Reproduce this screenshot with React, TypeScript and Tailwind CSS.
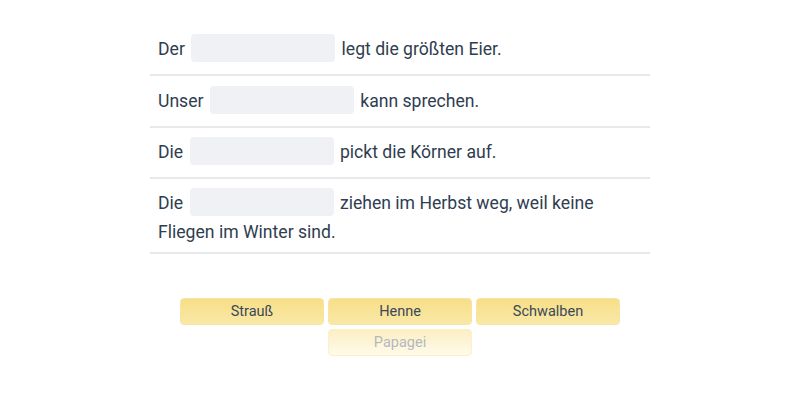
const rows: { before: string; after: string }[] = [
    { before: "Der", after: "legt die größten Eier." },
    { before: "Unser", after: "kann sprechen." },
    { before: "Die", after: "pickt die Körner auf." },
    { before: "Die", after: "ziehen im Herbst weg, weil keine Fliegen im Winter sind." },
];

const words = ["Strauß", "Henne", "Schwalben"];

const Blank = () => (
    <span className="inline-block align-[-11px] w-36 h-7 mx-0.5 mb-[4px] rounded bg-[#f0f1f5]"></span>
);

const App = () => {
    return (
        <div className="w-[800px] h-[400px] bg-white pt-[25px]" style={{ fontFamily: 'Roboto, "Liberation Sans", sans-serif' }}>
            <ul className="w-[500px] mx-auto">
                {rows.map((row, i) => (
                    <li key={i} className="px-2 pt-[9.25px] pb-[8px] border-b-2 border-[#e8e9eb] text-[17.6px] leading-[24px] text-[#2f3d50]">
                        {row.before} <Blank /> {row.after}
                    </li>
                ))}
            </ul>
            <div className="w-[440px] mx-auto mt-[44px] flex flex-wrap justify-center gap-x-1 gap-y-[4px]">
                {words.map(word => (
                    <button key={word} className="w-36 h-[27px] rounded border border-[#f7e4a0] bg-gradient-to-b from-[#f7df88] to-[#f9e8a7] text-[14.5px] text-[#3b4858]">
                        {word}
                    </button>
                ))}
                <button className="w-36 h-[27px] rounded border border-[#fbf0c8] bg-gradient-to-b from-[#fcefc2] to-[#fffaeb] text-[14.5px] text-[#b4b8bd]">
                    Papagei
                </button>
            </div>
        </div>
    );
}

export default App;
